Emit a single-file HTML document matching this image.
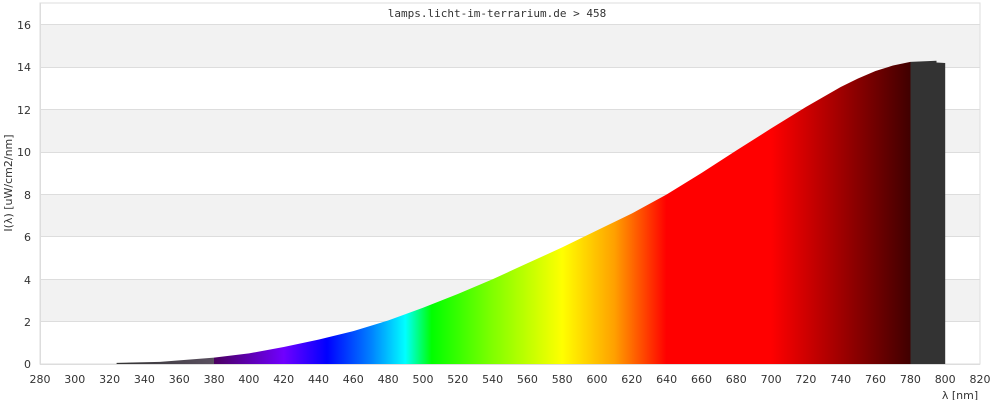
<!DOCTYPE html>
<html><head><meta charset="utf-8"><style>
html,body{margin:0;padding:0;background:#fff;width:1000px;height:400px;overflow:hidden}
svg text{font-family:"DejaVu Sans","Liberation Sans",sans-serif;font-size:11px;fill:#333}
</style></head><body>
<svg width="1000" height="400" viewBox="0 0 1000 400" xmlns="http://www.w3.org/2000/svg">
<defs>
<linearGradient id="sp" gradientUnits="userSpaceOnUse" x1="116.6" y1="0" x2="945.2" y2="0">
<stop offset="0" stop-color="#333"/>
<stop offset="0.1177" stop-color="#5a5060"/>
<stop offset="0.1178" stop-color="#4b0060"/>
<stop offset="0.2016" stop-color="#7000ff"/>
<stop offset="0.2539" stop-color="#0000ff"/>
<stop offset="0.3066" stop-color="#0080ff"/>
<stop offset="0.3485" stop-color="#00ffff"/>
<stop offset="0.3803" stop-color="#00ff00"/>
<stop offset="0.4538" stop-color="#80ff00"/>
<stop offset="0.5378" stop-color="#ffff00"/>
<stop offset="0.6008" stop-color="#ffa000"/>
<stop offset="0.6637" stop-color="#ff0000"/>
<stop offset="0.7897" stop-color="#ff0000"/>
<stop offset="0.9579" stop-color="#400000"/>
<stop offset="0.958" stop-color="#333"/>
<stop offset="1" stop-color="#333"/>
</linearGradient>
</defs>
<rect x="40" y="3" width="940" height="361" fill="#fff" stroke="#ddd"/>
<rect x="40.5" y="24.8" width="939" height="42.4" fill="#f2f2f2"/>
<rect x="40.5" y="109.6" width="939" height="42.4" fill="#f2f2f2"/>
<rect x="40.5" y="194.4" width="939" height="42.4" fill="#f2f2f2"/>
<rect x="40.5" y="279.2" width="939" height="42.4" fill="#f2f2f2"/>
<g stroke="#ddd" stroke-width="1">
<line x1="40" x2="980" y1="24.5" y2="24.5"/><line x1="40" x2="980" y1="67.5" y2="67.5"/>
<line x1="40" x2="980" y1="109.5" y2="109.5"/><line x1="40" x2="980" y1="152.5" y2="152.5"/>
<line x1="40" x2="980" y1="194.5" y2="194.5"/><line x1="40" x2="980" y1="236.5" y2="236.5"/>
<line x1="40" x2="980" y1="279.5" y2="279.5"/><line x1="40" x2="980" y1="321.5" y2="321.5"/>
<line x1="40" x2="980" y1="364.5" y2="364.5"/>
</g>
<polygon fill="url(#sp)" points="116.6,364 116.6,362.9 160,361.9 214,357.6 249,353.4 283.7,347 318.5,339.6 353.3,331.1 388.1,320.5 423,307.8 457.8,294 492.6,279.2 527.4,263.3 562.2,247.4 597,230.4 631.8,213.5 666.6,194.5 701.5,173 736.3,150.5 771,128.5 805.9,107 840.7,87 858,78.5 875.5,71 893,65.5 910.4,61.9 936.5,60.8 936.5,62.5 945.2,63 945.2,364"/>
<line x1="40.5" y1="3" x2="40.5" y2="364" stroke="#ddd"/>
<text x="497" y="17" text-anchor="middle" style="font-family:'DejaVu Sans Mono','Liberation Mono',monospace;font-size:11px">lamps.licht-im-terrarium.de &gt; 458</text>
<g text-anchor="end">
<text x="31" y="29">16</text><text x="31" y="71">14</text><text x="31" y="114">12</text>
<text x="31" y="156">10</text><text x="31" y="199">8</text><text x="31" y="241">6</text>
<text x="31" y="284">4</text><text x="31" y="326">2</text><text x="31" y="368">0</text>
</g>
<g text-anchor="middle">
<text x="40" y="383">280</text><text x="74.8" y="383">300</text><text x="109.6" y="383">320</text>
<text x="144.4" y="383">340</text><text x="179.3" y="383">360</text><text x="214.1" y="383">380</text>
<text x="248.9" y="383">400</text><text x="283.7" y="383">420</text><text x="318.5" y="383">440</text>
<text x="353.3" y="383">460</text><text x="388.1" y="383">480</text><text x="423" y="383">500</text>
<text x="457.8" y="383">520</text><text x="492.6" y="383">540</text><text x="527.4" y="383">560</text>
<text x="562.2" y="383">580</text><text x="597" y="383">600</text><text x="631.8" y="383">620</text>
<text x="666.6" y="383">640</text><text x="701.5" y="383">660</text><text x="736.3" y="383">680</text>
<text x="771.1" y="383">700</text><text x="805.9" y="383">720</text><text x="840.7" y="383">740</text>
<text x="875.5" y="383">760</text><text x="910.4" y="383">780</text><text x="945.2" y="383">800</text>
<text x="980" y="383">820</text>
</g>
<text x="960" y="399" text-anchor="middle">λ [nm]</text>
<text transform="translate(12,183) rotate(-90)" text-anchor="middle">I(λ)  [uW/cm2/nm]</text>
</svg>
</body></html>
